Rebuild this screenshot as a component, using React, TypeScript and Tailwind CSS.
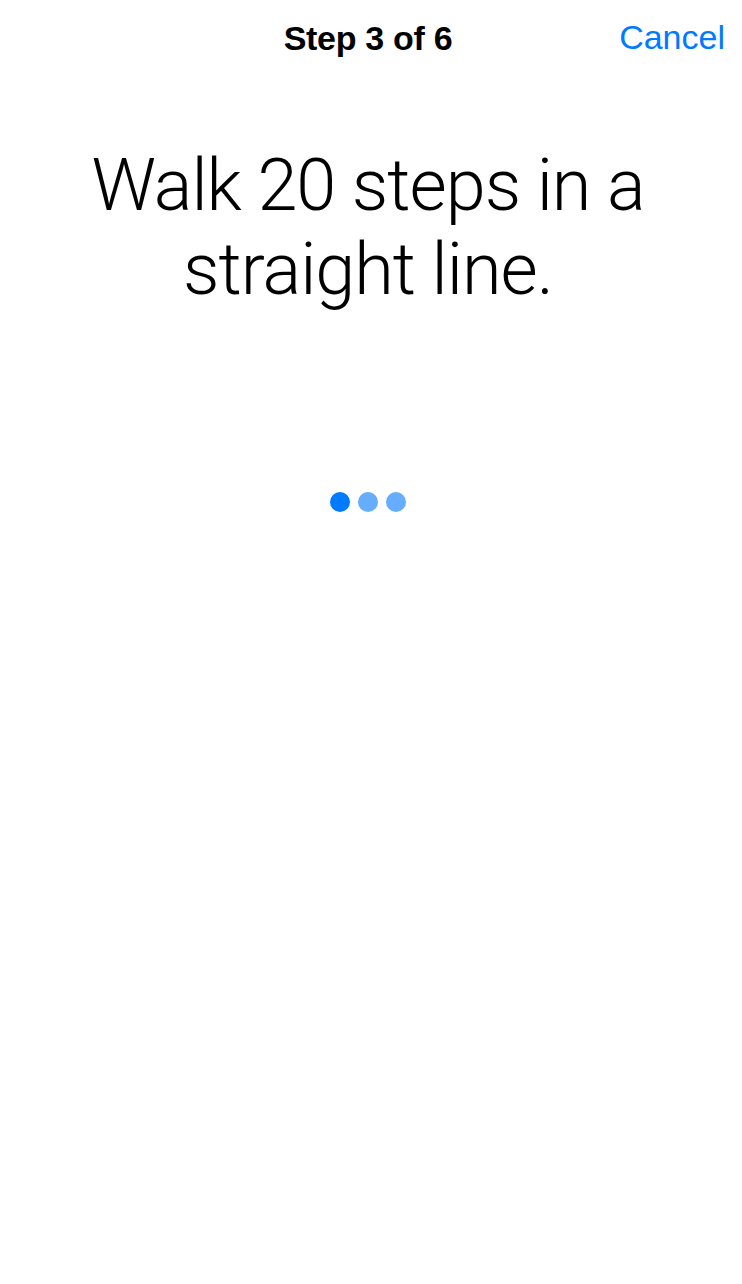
export default function App() {
    return (
        <div className="min-h-screen bg-white flex flex-col" style={{ fontFamily: '"Liberation Sans", Arial, sans-serif' }}>
            {/* Top bar */}
            <div className="relative h-[76px] flex items-center justify-center pr-[6px]">
                <h1 className="text-[34px] font-bold text-black tracking-[-0.3px]">Step 3 of 6</h1>
                <button className="absolute right-[17px] top-[20px] text-[34px] text-[#007aff] leading-none">
                    Cancel
                </button>
            </div>

            {/* Instruction */}
            <div className="mt-[68px] pl-6 pr-[30px] text-center">
                <p className="text-[72px] leading-[84px] font-light text-black tracking-[-1px]" style={{ fontFamily: 'Roboto, "Liberation Sans", sans-serif' }}>
                    Walk 20 steps in a straight line.
                </p>
            </div>

            {/* Progress dots */}
            <div className="mt-[180px] flex justify-center gap-2 pr-[6px]">
                <span className="w-5 h-5 rounded-full bg-[#007aff]" />
                <span className="w-5 h-5 rounded-full bg-[#66acff]" />
                <span className="w-5 h-5 rounded-full bg-[#66acff]" />
            </div>
        </div>
    );
}
